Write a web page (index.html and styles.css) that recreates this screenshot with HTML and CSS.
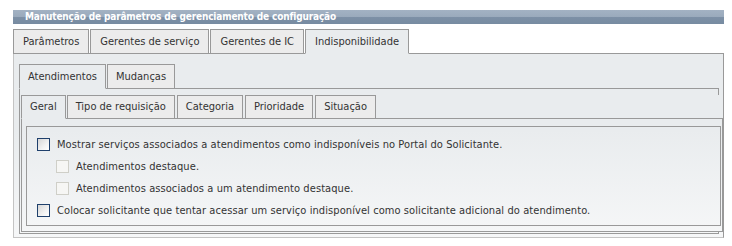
FILE: index.html
```html
<!DOCTYPE html>
<html lang="pt">
<head>
<meta charset="utf-8">
<title>Indisponibilidade</title>
<link rel="stylesheet" href="styles.css">
</head>
<body>
<div class="page">
  <div class="window">
    <div class="title">Manutenção de parâmetros de gerenciamento de configuração</div>
    <div class="tabs tabs-top">
      <div class="tab">Parâmetros</div>
      <div class="tab">Gerentes de serviço</div>
      <div class="tab">Gerentes de IC</div>
      <div class="tab active">Indisponibilidade</div>
    </div>
    <div class="panel panel-outer">
      <div class="tabs tabs-mid">
        <div class="tab active">Atendimentos</div>
        <div class="tab">Mudanças</div>
      </div>
      <div class="panel panel-mid">
        <div class="inner">
          <div class="tabs tabs-small">
            <div class="tab active">Geral</div>
            <div class="tab">Tipo de requisição</div>
            <div class="tab">Categoria</div>
            <div class="tab">Prioridade</div>
            <div class="tab">Situação</div>
          </div>
          <div class="panel panel-inner">
            <div class="options">
              <label class="option"><input type="checkbox" class="check"><span>Mostrar serviços associados a atendimentos como indisponíveis no Portal do Solicitante.</span></label>
              <label class="option sub"><input type="checkbox" class="check" disabled><span>Atendimentos destaque.</span></label>
              <label class="option sub"><input type="checkbox" class="check" disabled><span>Atendimentos associados a um atendimento destaque.</span></label>
              <label class="option"><input type="checkbox" class="check"><span>Colocar solicitante que tentar acessar um serviço indisponível como solicitante adicional do atendimento.</span></label>
            </div>
          </div>
        </div>
      </div>
    </div>
  </div>
</div>
</body>
</html>
```
FILE: styles.css
```css
* { box-sizing: border-box; }
body {
  margin: 0;
  background: #fff;
  font-family: "DejaVu Sans Condensed", "DejaVu Sans", sans-serif;
  font-size: 11px;
  color: #333;
}
.page { padding: 10px 0 0 13px; }
.window { width: 711px; }
.title {
  height: 14px;
  line-height: 14px;
  padding-left: 12px;
  color: #fff;
  font-size: 10px;
  font-weight: bold;
  letter-spacing: -0.15px;
  background: linear-gradient(to bottom, #a3b2c3 0, #9aaabc 50%, #7d90a6 50%, #778ba1 100%);
  white-space: nowrap;
}
.tabs {
  display: flex;
  align-items: flex-end;
  position: relative;
  z-index: 1;
  margin-bottom: -1px;
}
.tabs-top { margin-top: 5px; }
.tab {
  height: 25px;
  line-height: 23px;
  padding: 0 9px;
  margin-right: 1px;
  border: 1px solid #999;
  background: #ececec;
  white-space: nowrap;
}
.tabs-mid .tab { padding: 0 8px; }
.tab.active {
  background: #e9ecee;
  border-bottom-color: #e9ecee;
}
.tabs-small .tab {
  height: 24px;
  line-height: 22px;
  padding: 0 8px;
  margin-right: 2px;
}
.tabs-small .tab:first-child { margin-right: 1px; }
.panel { border: 1px solid #999; }
.panel-outer {
  padding: 10px 0 3px 5px;
  border-left-color: #c4c4c4;
  border-bottom-color: #c4c4c4;
  background: linear-gradient(to bottom, #e9ecee 0, #e9ecee 130px, #f6f7f8 240px) fixed;
}
.panel-mid {
  width: 700px;
  padding: 6px 0 1px 1px;
}
.inner {
  width: 702px;
  background: linear-gradient(to bottom, #e9ecee 0, #e9ecee 130px, #f6f7f8 240px) fixed;
}
.panel-inner { padding: 7px 1px 5px 4px; }
.options {
  width: 695px;
  height: 100px;
  border: 1px solid #999;
  padding: 6px 0 4px 10px;
  letter-spacing: 0.08px;
}
.option {
  display: flex;
  align-items: center;
  height: 22px;
  white-space: nowrap;
}
.option.sub { padding-left: 19px; }
.check {
  appearance: none;
  -webkit-appearance: none;
  margin: 0 7px 0 0;
  width: 13px;
  height: 13px;
  flex: none;
  border: 1px solid #1f406c;
  background: linear-gradient(135deg, #d6d6d6 0, #f2f2f2 60%, #fff 100%);
}
.check:disabled {
  border-color: #cfcfc8;
  background: #f6f6f4;
}
```
